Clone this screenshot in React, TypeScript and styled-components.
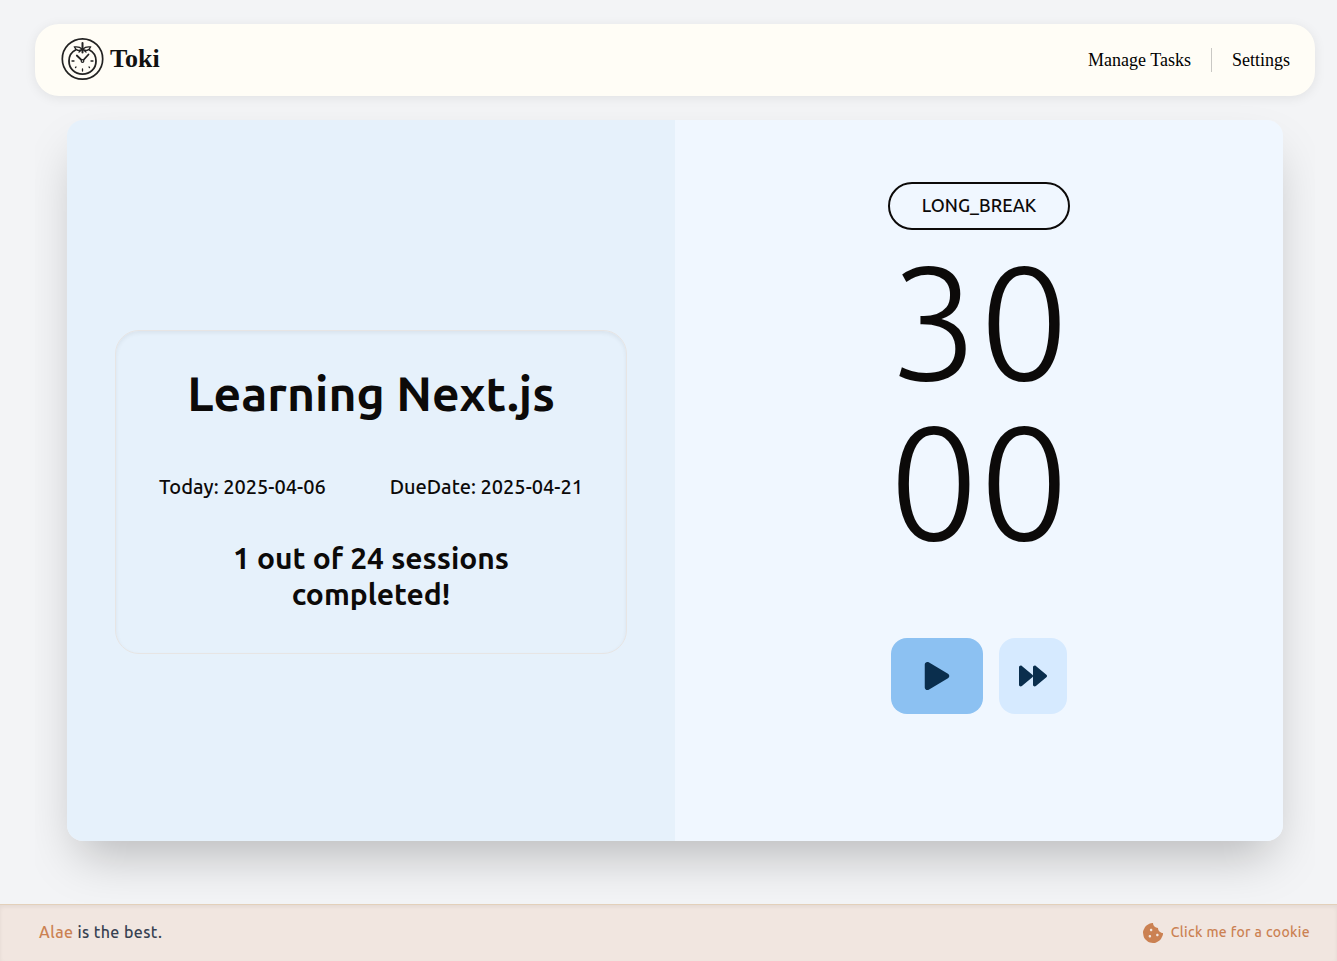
import React from "react";
import styled, { createGlobalStyle } from "styled-components";
import { FaPlay, FaForward, FaCookieBite } from "react-icons/fa";

const GlobalStyle = createGlobalStyle`
  *, *::before, *::after { box-sizing: border-box; }
  body {
    margin: 0;
    background: #f3f4f6;
    color: #0c0a09;
    font-family: Ubuntu, "Noto Sans", "Open Sans", sans-serif;
  }
  h1, h2, p { margin: 0; }
  button { font: inherit; color: inherit; cursor: pointer; }
  a { color: inherit; text-decoration: none; }
`;

const Page = styled.div`
  min-height: 100vh;
  display: flex;
  flex-direction: column;
`;

const Shell = styled.div`
  flex: 1;
  display: flex;
  flex-direction: column;
  gap: 24px;
  margin: 0 22px 0 35px;
  padding-top: 24px;
`;

const Header = styled.header`
  height: 72px;
  display: flex;
  align-items: center;
  justify-content: space-between;
  padding: 0 25px 0 26px;
  background: #fffdf6;
  border-radius: 24px;
  box-shadow: 0 2px 12px rgba(0, 0, 0, 0.08);
  font-family: "Liberation Serif", serif;
`;

const Brand = styled.a`
  display: flex;
  align-items: center;
  gap: 6px;
  padding-bottom: 2px;
  color: #111;
`;

const BrandName = styled.span`
  font-size: 26px;
  line-height: 32px;
  font-weight: 700;
`;

const Nav = styled.nav`
  display: flex;
  align-items: center;
  font-size: 18px;
  line-height: 24px;
  color: #000;
`;

const NavLink = styled.a`
  & + & {
    margin-left: 20px;
    padding-left: 20px;
    border-left: 1px solid #c9c8c4;
  }
`;

const Stage = styled.main`
  flex: 1;
  display: flex;
  padding: 0 32px 63px;
  clip-path: inset(-24px 0 0 0);
`;

const Board = styled.div`
  flex: 1;
  display: grid;
  grid-template-columns: 1fr 1fr;
  border-radius: 16px;
  overflow: hidden;
  box-shadow: 0 25px 50px -12px rgba(0, 0, 0, 0.25);
`;

const TaskPane = styled.section`
  display: flex;
  align-items: center;
  justify-content: center;
  padding: 23px 48px 0;
  background: #e6f1fb;
`;

const TaskCard = styled.article`
  width: 100%;
  max-width: 512px;
  display: flex;
  flex-direction: column;
  align-items: center;
  gap: 39px;
  padding: 38px 40px 41px;
  border: 1px solid #e7e5e4;
  border-radius: 24px;
  box-shadow: inset 0 2px 4px rgba(0, 0, 0, 0.06);
  text-align: center;
`;

const TaskTitle = styled.h1`
  margin-bottom: 17px;
  font-size: 48px;
  line-height: 48px;
  font-weight: 600;
`;

const Dates = styled.div`
  display: flex;
  justify-content: center;
  gap: 64px;
  font-size: 20px;
  line-height: 28px;
  font-weight: 500;
  white-space: nowrap;
`;

const Progress = styled.h2`
  max-width: 320px;
  font-size: 30px;
  line-height: 36px;
  font-weight: 600;
`;

const TimerPane = styled.section`
  display: flex;
  flex-direction: column;
  align-items: center;
  justify-content: center;
  padding-bottom: 65px;
  background: #f0f7ff;
`;

const ModeButton = styled.button`
  height: 48px;
  padding: 0 32px 2px;
  border: 2px solid #0c0a09;
  border-radius: 24px;
  background: transparent;
  font-size: 18px;
  line-height: 28px;
  font-weight: 500;
`;

const Clock = styled.div`
  display: flex;
  flex-direction: column;
  margin: 11px 0 77px;
  font-size: 160px;
  line-height: 160px;
  font-weight: 300;
`;

const Controls = styled.div`
  display: flex;
  gap: 16px;
`;

const ControlButton = styled.button<{ $primary?: boolean }>`
  display: flex;
  align-items: center;
  justify-content: center;
  height: 76px;
  padding: 0 ${(p) => (p.$primary ? 32 : 20)}px;
  border: 0;
  border-radius: 16px;
  background: ${(p) => (p.$primary ? "#8cc1f2" : "#d6eaff")};
  color: #0a2e4d;

  svg { width: 28px; height: 28px; }
`;

const Footer = styled.footer`
  height: 57px;
  display: flex;
  align-items: center;
  justify-content: space-between;
  padding: 0 27px 0 39px;
  background: #f1e6e0;
  border-top: 1px solid #e3d0ba;
  box-shadow: inset 0 2px 4px rgba(0, 0, 0, 0.06);
  color: #374151;
  font-size: 16px;
  line-height: 24px;
  font-weight: 500;
  letter-spacing: 0.025em;
`;

const Credit = styled.p`
  padding-bottom: 2px;
`;

const Accent = styled.a`
  color: #cb8152;
`;

const CookieButton = styled.button`
  display: flex;
  align-items: center;
  gap: 8px;
  padding: 0;
  border: 0;
  background: none;
  color: #cb8152;
  font-size: 14px;
  line-height: 20px;
  letter-spacing: 0.025em;
`;

const CookieLabel = styled.span`
  padding-bottom: 2px;
`;

function TomatoClock() {
  return (
    <svg width="43" height="44" viewBox="0 0 43 44" fill="none" stroke="#222" strokeLinecap="round" aria-hidden="true">
      <circle cx="21.5" cy="22" r="20.2" strokeWidth="1.7" />
      <path d="M14.500 13C10.500 15 8 19 8 24c0 7.600 5.800 13.200 13.500 13.200S35 31.600 35 24c0-5-2.500-9-6.500-11" strokeWidth="1.800" />
      <path d="M21 12c-2-2-4.500-2.500-7.500-2 1.500 3.500 4.500 4.500 7.500 2M22 12c2-2 4.500-2.500 7.500-2-1.500 3.500-4.500 4.500-7.500 2M21 12.500l-3 2.500M22 12.500l3 2.500" strokeWidth="1.400" />
      <path d="M21.500 6v9.500" strokeWidth="2" />
      <path d="m15.800 18.500 5.700 5.500 6-6.500" strokeWidth="1.800" />
      <circle cx="21.500" cy="24" r="1.300" fill="#fffdf6" strokeWidth="1.200" />
      <path d="M11 24h2M30 24h2M21.500 32v2M14.500 30.500l.5-.5M28.500 30.500l-.5-.5" strokeWidth="1.300" />
    </svg>
  );
}

export default function App() {
  return (
    <>
      <GlobalStyle />
      <Page>
        <Shell>
          <Header>
            <Brand href="#home">
              <TomatoClock />
              <BrandName>Toki</BrandName>
            </Brand>
            <Nav>
              <NavLink href="#tasks">Manage Tasks</NavLink>
              <NavLink href="#settings">Settings</NavLink>
            </Nav>
          </Header>
          <Stage>
            <Board>
              <TaskPane>
                <TaskCard>
                  <TaskTitle>Learning Next.js</TaskTitle>
                  <Dates>
                    <p>Today: 2025-04-06</p>
                    <p>DueDate: 2025-04-21</p>
                  </Dates>
                  <Progress>1 out of 24 sessions completed!</Progress>
                </TaskCard>
              </TaskPane>
              <TimerPane>
                <ModeButton>LONG_BREAK</ModeButton>
                <Clock>
                  <span>30</span>
                  <span>00</span>
                </Clock>
                <Controls>
                  <ControlButton $primary aria-label="Start">
                    <FaPlay />
                  </ControlButton>
                  <ControlButton aria-label="Skip">
                    <FaForward />
                  </ControlButton>
                </Controls>
              </TimerPane>
            </Board>
          </Stage>
        </Shell>
        <Footer>
          <Credit>
            <Accent href="#alae">Alae</Accent> is the best.
          </Credit>
          <CookieButton>
            <FaCookieBite size={20} />
            <CookieLabel>Click me for a cookie</CookieLabel>
          </CookieButton>
        </Footer>
      </Page>
    </>
  );
}
